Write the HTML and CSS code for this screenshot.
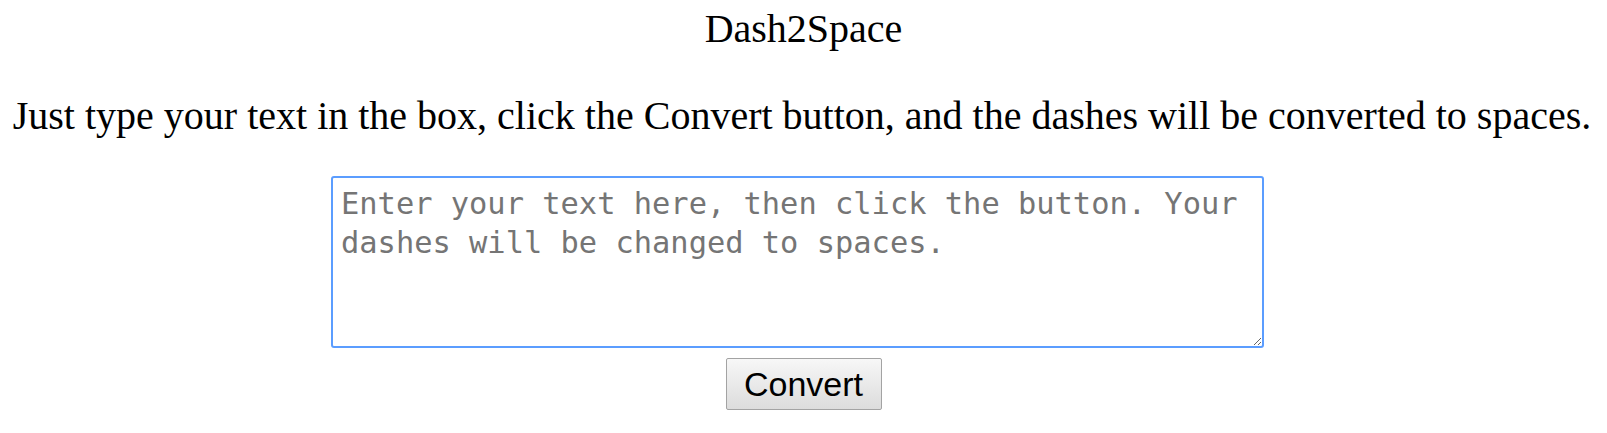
FILE: index.html
```html
<!DOCTYPE html>
<html>
<head>
<meta charset="utf-8">
<title>Dash2Space</title>
<link rel="stylesheet" href="styles.css">
</head>
<body>
<main class="page">
  <h1 class="title">Dash2Space</h1>
  <p class="intro">Just type your text in the box, click the Convert button, and the dashes will be converted to spaces.</p>
  <div class="editor">
    <textarea class="box" placeholder="Enter your text here, then click the button. Your dashes will be changed to spaces." autofocus></textarea>
    <button class="convert" type="button">Convert</button>
  </div>
</main>
</body>
</html>
```

FILE: styles.css
```css
html, body {
  margin: 0;
  padding: 0;
  background: #ffffff;
}
body {
  font-family: "Liberation Serif", "Times New Roman", serif;
  color: #000;
}
.page {
  display: flex;
  flex-direction: column;
  align-items: center;
  padding-top: 6px;
}
.title {
  margin: 0;
  font-size: 40px;
  font-weight: normal;
  line-height: 46px;
}
.intro {
  margin: 41px 0 0 0;
  padding-right: 3px;
  font-size: 40px;
  line-height: 46px;
  white-space: nowrap;
}
.editor {
  display: flex;
  flex-direction: column;
  align-items: center;
  margin-top: 37px;
}
.box {
  box-sizing: border-box;
  width: 933px;
  height: 172px;
  margin: 0 12px 0 0;
  padding: 6px 8px;
  border: 2px solid #5b9dff;
  border-radius: 3px;
  outline: none;
  font-family: "DejaVu Sans Mono", "Liberation Mono", monospace;
  font-size: 30.4px;
  line-height: 39px;
  color: #000;
  resize: both;
}
.box::placeholder {
  color: #757575;
}
.convert {
  margin-top: 10px;
  width: 156px;
  height: 52px;
  box-sizing: border-box;
  border: 1px solid #a3a3a3;
  border-radius: 2px;
  background: linear-gradient(#f7f7f7, #dcdcdc);
  font-family: "Liberation Sans", Arial, sans-serif;
  font-size: 34px;
  color: #000;
  padding: 0;
}
```
